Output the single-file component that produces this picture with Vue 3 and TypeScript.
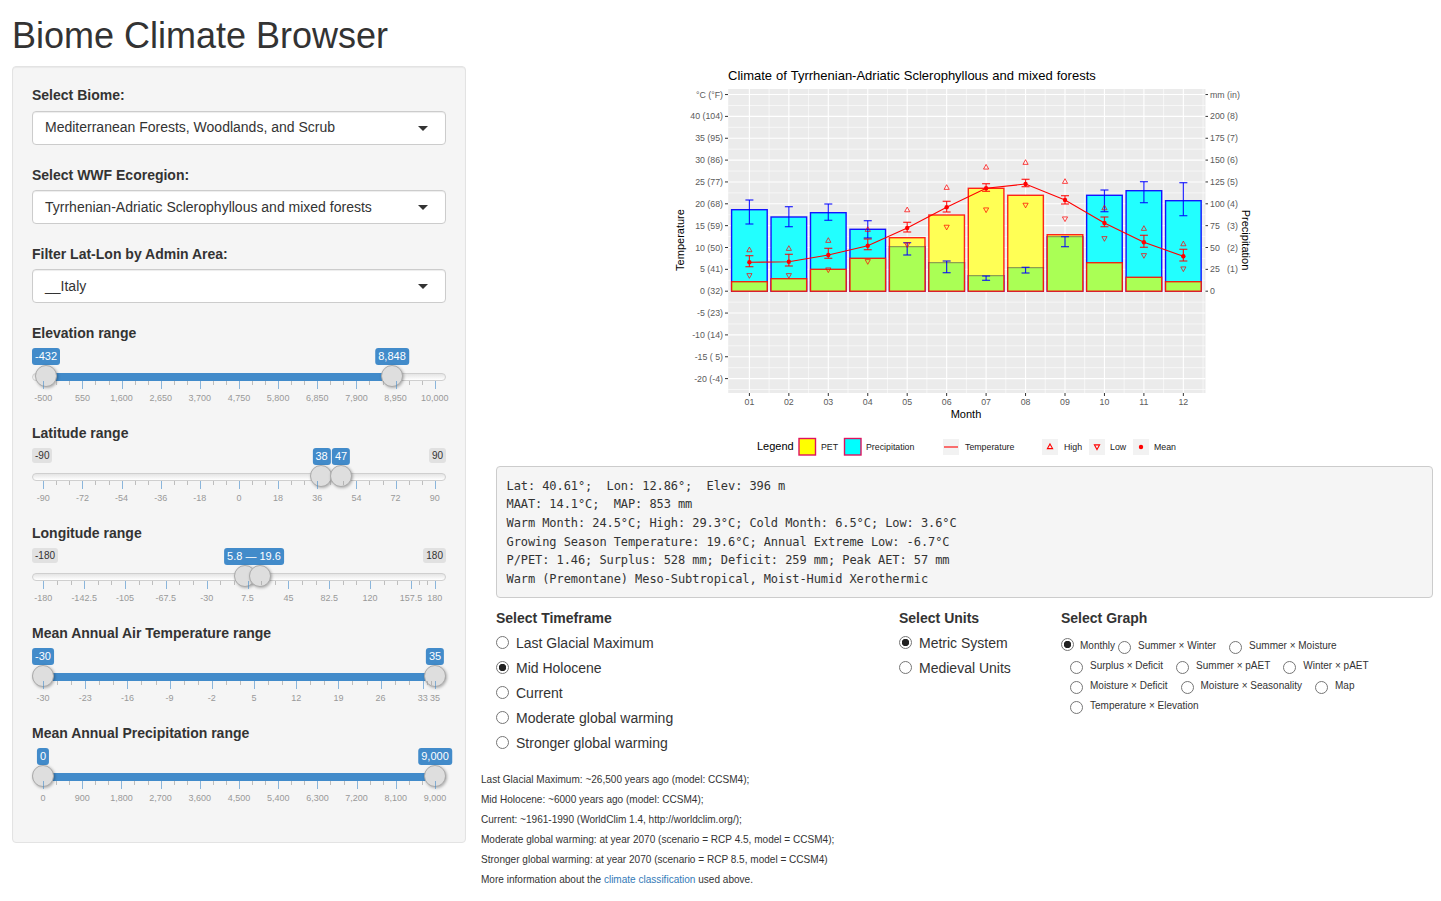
<script setup lang="ts">
interface Tag {
  text: string
  center: number
}

interface SliderDef {
  label: string
  ticks: [number, string][]
  handles: number[]
  tags: Tag[]
  fill: [number, number] | null
  minTag?: string
  maxTag?: string
}

function evenTicks(labels: string[], start: number, step: number): [number, string][] {
  return labels.map((l, i) => [start + i * step, l])
}

const sliders: SliderDef[] = [
  {
    label: 'Elevation range',
    ticks: evenTicks(['-500', '550', '1,600', '2,650', '3,700', '4,750', '5,800', '6,850', '7,900', '8,950', '10,000'], 11.3, 39.14),
    handles: [14, 360],
    tags: [{ text: '-432', center: 14 }, { text: '8,848', center: 360 }],
    fill: [14, 360],
  },
  {
    label: 'Latitude range',
    ticks: evenTicks(['-90', '-72', '-54', '-36', '-18', '0', '18', '36', '54', '72', '90'], 11.3, 39.14),
    handles: [289, 309],
    tags: [{ text: '38', center: 289.5 }, { text: '47', center: 309 }],
    fill: null,
    minTag: '-90',
    maxTag: '90',
  },
  {
    label: 'Longitude range',
    ticks: [
      ...evenTicks(['-180', '-142.5', '-105', '-67.5', '-30', '7.5', '45', '82.5', '120', '157.5'], 11.3, 40.85),
      [402.7, '180'],
    ],
    handles: [213, 228],
    tags: [{ text: '5.8 — 19.6', center: 222 }],
    fill: null,
    minTag: '-180',
    maxTag: '180',
  },
  {
    label: 'Mean Annual Air Temperature range',
    ticks: [
      ...evenTicks(['-30', '-23', '-16', '-9', '-2', '5', '12', '19', '26', '33'], 11, 42.2),
      [403, '35'],
    ],
    handles: [11, 403],
    tags: [{ text: '-30', center: 11 }, { text: '35', center: 403 }],
    fill: [11, 403],
  },
  {
    label: 'Mean Annual Precipitation range',
    ticks: evenTicks(['0', '900', '1,800', '2,700', '3,600', '4,500', '5,400', '6,300', '7,200', '8,100', '9,000'], 11, 39.2),
    handles: [11, 403],
    tags: [{ text: '0', center: 11 }, { text: '9,000', center: 403 }],
    fill: [11, 403],
  },
]

function minorTicks(def: SliderDef) {
  const out: number[] = []
  for (let i = 0; i < def.ticks.length - 1; i++) {
    const a = def.ticks[i][0]
    const b = def.ticks[i + 1][0]
    out.push(a + (b - a) / 3, a + (2 * (b - a)) / 3)
  }
  return out
}

const timeframes = ['Last Glacial Maximum', 'Mid Holocene', 'Current', 'Moderate global warming', 'Stronger global warming']
const units = ['Metric System', 'Medieval Units']
const graphRows = [
  ['Monthly', 'Summer × Winter', 'Summer × Moisture'],
  ['Surplus × Deficit', 'Summer × pAET', 'Winter × pAET'],
  ['Moisture × Deficit', 'Moisture × Seasonality', 'Map'],
  ['Temperature × Elevation'],
]

const statLines = [
  'Lat: 40.61°;  Lon: 12.86°;  Elev: 396 m',
  'MAAT: 14.1°C;  MAP: 853 mm',
  'Warm Month: 24.5°C; High: 29.3°C; Cold Month: 6.5°C; Low: 3.6°C',
  'Growing Season Temperature: 19.6°C; Annual Extreme Low: -6.7°C',
  'P/PET: 1.46; Surplus: 528 mm; Deficit: 259 mm; Peak AET: 57 mm',
  'Warm (Premontane) Meso-Subtropical, Moist-Humid Xerothermic',
]

// chart: the svg viewBox uses the coordinates of the page
const zeroY = 291.2
const perDeg = 4.37
const monthX = (i: number) => 749.4 + i * 39.45
const tempY = (t: number) => zeroY - t * perDeg

const leftLabels: [number, string][] = [
  [45, '°C (°F)'], [40, '40 (104)'], [35, '35 (95)'], [30, '30 (86)'], [25, '25 (77)'], [20, '20 (68)'],
  [15, '15 (59)'], [10, '10 (50)'], [5, '5 (41)'], [0, '0 (32)'], [-5, '-5 (23)'], [-10, '-10 (14)'],
  [-15, '-15 ( 5)'], [-20, '-20 (-4)'],
]
const rightLabels: [number, string][] = [
  [45, 'mm (in)'], [40, '200 (8)'], [35, '175 (7)'], [30, '150 (6)'], [25, '125 (5)'], [20, '100 (4)'],
  [15, '75   (3)'], [10, '50   (2)'], [5, '25   (1)'], [0, '0'],
]
const majorY = leftLabels.map((l) => tempY(l[0]))
const minorY = leftLabels.map((l) => tempY(l[0] - 2.5))
const months = ['01', '02', '03', '04', '05', '06', '07', '08', '09', '10', '11', '12']

const climate = [
  { cyan: 209.7, pet: 281.7, blue: [200, 224], red: [255.7, 266.7], mean: 262.3, high: 249.7, low: 275.7 },
  { cyan: 217, pet: 278.7, blue: [206.7, 226.7], red: [254.3, 266], mean: 261.7, high: 248.3, low: 275.7 },
  { cyan: 212.7, pet: 269.3, blue: [204, 220.3], red: [248.3, 258.3], mean: 255, high: 240.3, low: 270 },
  { cyan: 229.3, pet: 258.3, blue: [220.7, 238], red: [239, 249.7], mean: 245.7, high: 229.3, low: 261.7 },
  { cyan: 246.7, pet: 237.7, blue: [242.7, 255], red: [222.3, 232], mean: 228, high: 209.7, low: 245 },
  { cyan: 262.7, pet: 215, blue: [261, 272.7], red: [201.3, 212], mean: 207.3, high: 187.3, low: 227.3 },
  { cyan: 275.7, pet: 188.3, blue: [276, 280.3], red: [183.7, 191.3], mean: 188.3, high: 167, low: 210 },
  { cyan: 267.7, pet: 195.3, blue: [267.3, 273], red: [179.3, 186.7], mean: 184, high: 162.3, low: 205.3 },
  { cyan: 236.7, pet: 234.7, blue: [236.7, 246.7], red: [195.7, 204], mean: 200, high: 181.3, low: 219 },
  { cyan: 195.3, pet: 262.7, blue: [190, 211.7], red: [217, 226.7], mean: 223, high: 207.7, low: 238.7 },
  { cyan: 190.7, pet: 277.3, blue: [181.7, 202.7], red: [235.3, 247.3], mean: 242.3, high: 228.3, low: 255.7 },
  { cyan: 200.7, pet: 281.7, blue: [182.7, 215.7], red: [249.3, 261], mean: 256.3, high: 243.7, low: 269 },
]
const meanLine = climate.map((c, i) => `${monthX(i)},${c.mean}`).join(' ')

const upTri = (x: number, y: number, s = 2.6) => `${x},${y - s} ${x + s},${y + s * 0.8} ${x - s},${y + s * 0.8}`
const downTri = (x: number, y: number, s = 2.6) => `${x},${y + s} ${x + s},${y - s * 0.8} ${x - s},${y - s * 0.8}`
</script>

<template>
  <div class="page">
    <h1 class="title">Biome Climate Browser</h1>
    <div class="columns">
      <aside class="well">
        <div class="select-group">
          <label class="ctl-label">Select Biome:</label>
          <div class="select">Mediterranean Forests, Woodlands, and Scrub<span class="caret"></span></div>
        </div>
        <div class="select-group">
          <label class="ctl-label">Select WWF Ecoregion:</label>
          <div class="select">Tyrrhenian-Adriatic Sclerophyllous and mixed forests<span class="caret"></span></div>
        </div>
        <div class="select-group">
          <label class="ctl-label">Filter Lat-Lon by Admin Area:</label>
          <div class="select">__Italy<span class="caret"></span></div>
        </div>

        <div v-for="s in sliders" :key="s.label" class="slider-group">
          <label class="ctl-label">{{ s.label }}</label>
          <div class="rs">
            <span v-if="s.minTag" class="rs-side rs-side--min">{{ s.minTag }}</span>
            <span v-if="s.maxTag" class="rs-side rs-side--max">{{ s.maxTag }}</span>
            <span
              v-for="t in s.tags"
              :key="t.text"
              class="rs-tag"
              :style="{ left: t.center + 'px' }"
              :class="{ 'rs-tag--clamp': t.text === '-432' }"
            >{{ t.text }}</span>
            <div class="rs-track"></div>
            <div
              v-if="s.fill"
              class="rs-fill"
              :style="{ left: s.fill[0] + 'px', width: s.fill[1] - s.fill[0] + 'px' }"
            ></div>
            <span
              v-for="h in s.handles"
              :key="h"
              class="rs-handle"
              :style="{ left: h + 'px' }"
            ></span>
            <span
              v-for="m in minorTicks(s)"
              :key="m"
              class="rs-minor"
              :style="{ left: m + 'px' }"
            ></span>
            <template v-for="t in s.ticks" :key="t[1]">
              <span class="rs-major" :style="{ left: t[0] + 'px' }"></span>
              <span class="rs-num" :style="{ left: t[0] + 'px' }">{{ t[1] }}</span>
            </template>
          </div>
        </div>
      </aside>

      <main class="main">
        <div class="inner">
          <svg class="chart" width="937" height="400" viewBox="496 66 937 400">
            <text x="728" y="80" class="c-title">Climate of Tyrrhenian-Adriatic Sclerophyllous and mixed forests</text>
            <rect x="728.2" y="89" width="477.3" height="304" fill="#ebebeb" />
            <line v-for="y in minorY" :key="y" x1="728.2" x2="1205.5" :y1="y" :y2="y" stroke="#fff" stroke-width="0.6" />
            <line v-for="y in majorY" :key="y" x1="728.2" x2="1205.5" :y1="y" :y2="y" stroke="#fff" stroke-width="1.1" />
            <template v-for="(m, i) in months" :key="m">
              <line :x1="monthX(i)" :x2="monthX(i)" y1="89" y2="393" stroke="#fff" stroke-width="1.1" />
              <line :x1="monthX(i) + 19.7" :x2="monthX(i) + 19.7" y1="89" y2="393" stroke="#fff" stroke-width="0.6" />
              <line :x1="monthX(i)" :x2="monthX(i)" y1="393" y2="396" stroke="#333" stroke-width="1" />
              <text :x="monthX(i)" y="405" text-anchor="middle" class="c-tick">{{ m }}</text>
            </template>

            <template v-for="l in leftLabels" :key="l[1]">
              <line x1="725" x2="728" :y1="tempY(l[0])" :y2="tempY(l[0])" stroke="#333" stroke-width="1" />
              <text x="723" :y="tempY(l[0]) + 3" text-anchor="end" class="c-tick">{{ l[1] }}</text>
            </template>
            <template v-for="l in rightLabels" :key="l[1]">
              <line x1="1205.5" x2="1208" :y1="tempY(l[0])" :y2="tempY(l[0])" stroke="#333" stroke-width="1" />
              <text x="1210" :y="tempY(l[0]) + 3" class="c-tick">{{ l[1] }}</text>
            </template>

            <template v-for="(c, i) in climate" :key="i">
              <rect :x="monthX(i) - 17.8" :y="c.cyan" width="35.6" :height="zeroY - c.cyan" fill="#22ffff" stroke="#1414ff" stroke-width="1.4" />
              <rect :x="monthX(i) - 17.8" :y="c.pet" width="35.6" :height="zeroY - c.pet" fill="#ffff55" />
              <rect
                :x="monthX(i) - 17.8"
                :y="Math.max(c.cyan, c.pet)"
                width="35.6"
                :height="zeroY - Math.max(c.cyan, c.pet)"
                fill="#aaff55"
              />
              <line
                v-if="c.pet < c.cyan"
                :x1="monthX(i) - 17.8"
                :x2="monthX(i) + 17.8"
                :y1="c.cyan"
                :y2="c.cyan"
                stroke="#8f9f4f"
                stroke-width="1.2"
              />
              <rect :x="monthX(i) - 17.8" :y="c.pet" width="35.6" :height="zeroY - c.pet" fill="none" stroke="#ff0000" stroke-opacity="0.85" stroke-width="1.4" />
            </template>
            <template v-for="(c, i) in climate" :key="'err' + i">
              <g stroke="#0000ff" stroke-width="1.2" stroke-opacity="0.85">
                <line :x1="monthX(i)" :x2="monthX(i)" :y1="c.blue[0]" :y2="c.blue[1]" />
                <line :x1="monthX(i) - 4" :x2="monthX(i) + 4" :y1="c.blue[0]" :y2="c.blue[0]" />
                <line :x1="monthX(i) - 4" :x2="monthX(i) + 4" :y1="c.blue[1]" :y2="c.blue[1]" />
              </g>
              <g stroke="#ff0000" stroke-width="1.2" stroke-opacity="0.85">
                <line :x1="monthX(i)" :x2="monthX(i)" :y1="c.red[0]" :y2="c.red[1]" />
                <line :x1="monthX(i) - 4" :x2="monthX(i) + 4" :y1="c.red[0]" :y2="c.red[0]" />
                <line :x1="monthX(i) - 4" :x2="monthX(i) + 4" :y1="c.red[1]" :y2="c.red[1]" />
              </g>
              <polygon :points="upTri(monthX(i), c.high)" fill="none" stroke="#ff0000" stroke-opacity="0.8" stroke-width="0.9" />
              <polygon :points="downTri(monthX(i), c.low)" fill="none" stroke="#ff0000" stroke-opacity="0.8" stroke-width="0.9" />
              <circle :cx="monthX(i)" :cy="c.mean" r="2.2" fill="#ff0000" />
            </template>
            <polyline :points="meanLine" fill="none" stroke="#ff0000" stroke-width="1.1" />

            <text x="966" y="418" text-anchor="middle" class="c-axis">Month</text>
            <text transform="translate(684 240) rotate(-90)" text-anchor="middle" class="c-axis">Temperature</text>
            <text transform="translate(1242 240) rotate(90)" text-anchor="middle" class="c-axis">Precipitation</text>

            <text x="757" y="450" class="c-axis">Legend</text>
            <rect x="799" y="438.5" width="16.5" height="16.5" fill="#ffff00" stroke="#e0115f" stroke-width="1.4" />
            <text x="821" y="450" class="c-leg">PET</text>
            <rect x="844.5" y="438.5" width="16.5" height="16.5" fill="#00ffff" stroke="#e0115f" stroke-width="1.4" />
            <text x="866" y="450" class="c-leg">Precipitation</text>
            <rect x="943" y="439" width="16" height="16" fill="#f2f2f2" />
            <line x1="944" x2="958" y1="447" y2="447" stroke="#ff0000" stroke-width="1.1" />
            <text x="965" y="450" class="c-leg">Temperature</text>
            <rect x="1042" y="439" width="16" height="16" fill="#f2f2f2" />
            <polygon :points="upTri(1050, 446.5)" fill="none" stroke="#ff0000" stroke-width="1.1" />
            <text x="1064" y="450" class="c-leg">High</text>
            <rect x="1089" y="439" width="16" height="16" fill="#f2f2f2" />
            <polygon :points="downTri(1097, 447)" fill="none" stroke="#ff0000" stroke-width="1.1" />
            <text x="1110" y="450" class="c-leg">Low</text>
            <rect x="1133" y="439" width="16" height="16" fill="#f2f2f2" />
            <circle cx="1141" cy="447" r="2.2" fill="#ff0000" />
            <text x="1154" y="450" class="c-leg">Mean</text>
          </svg>

          <pre class="stats"><template v-for="l in statLines" :key="l">{{ l }}
</template></pre>

          <div class="choices">
            <div class="choice-col choice-col--time">
              <div class="ctl-label ctl-label--tight">Select Timeframe</div>
              <label v-for="(t, i) in timeframes" :key="t" class="radio-line">
                <input type="radio" name="time" :checked="i === 1" />{{ t }}
              </label>
            </div>
            <div class="choice-col choice-col--units">
              <div class="ctl-label ctl-label--tight">Select Units</div>
              <label v-for="(u, i) in units" :key="u" class="radio-line">
                <input type="radio" name="units" :checked="i === 0" />{{ u }}
              </label>
            </div>
            <div class="choice-col">
              <div class="ctl-label">Select Graph</div>
              <div class="graph-rows">
                <div v-for="(row, r) in graphRows" :key="r" class="graph-row" :class="{ 'graph-row--first': r === 0 }">
                  <label v-for="g in row" :key="g" class="graph-item" :class="{ 'graph-item--on': g === 'Monthly' }">
                    <input type="radio" name="graph" :checked="g === 'Monthly'" />{{ g }}
                  </label>
                </div>
              </div>
            </div>
          </div>
        </div>

        <div class="notes">
          <p>Last Glacial Maximum: ~26,500 years ago (model: CCSM4);</p>
          <p>Mid Holocene: ~6000 years ago (model: CCSM4);</p>
          <p>Current: ~1961-1990 (WorldClim 1.4, http://worldclim.org/);</p>
          <p>Moderate global warming: at year 2070 (scenario = RCP 4.5, model = CCSM4);</p>
          <p>Stronger global warming: at year 2070 (scenario = RCP 8.5, model = CCSM4)</p>
          <p>More information about the <a href="#">climate classification</a> used above.</p>
        </div>
      </main>
    </div>
  </div>
</template>

<style>
body {
  background: #fff;
}
</style>

<style scoped>
.page {
  font-family: "Liberation Sans", Arial, sans-serif;
  color: #333;
  font-size: 14px;
  line-height: 20px;
  padding: 0 8px 0 12px;
  box-sizing: border-box;
  width: 1441px;
}

.title {
  font-size: 36px;
  font-weight: 400;
  line-height: 40px;
  margin: 16px 0 10px;
}

.columns {
  display: flex;
  align-items: flex-start;
}

.well {
  width: 454px;
  height: 777px;
  box-sizing: border-box;
  flex: none;
  background: #f5f5f5;
  border: 1px solid #e3e3e3;
  border-radius: 4px;
  padding: 19px;
  box-shadow: inset 0 1px 1px rgba(0, 0, 0, 0.05);
}

.ctl-label {
  display: block;
  font-weight: 700;
  margin-bottom: 5px;
}

.ctl-label--tight {
  margin-bottom: 2px;
}

.select-group {
  margin-bottom: 20px;
}

.select-group:first-child .ctl-label {
  margin-top: -1px;
  margin-bottom: 6px;
}

.select-group:first-child .select {
  padding-top: 5px;
}

.select {
  position: relative;
  height: 34px;
  box-sizing: border-box;
  border: 1px solid #ccc;
  border-radius: 4px;
  background: #fff;
  padding: 6px 12px;
  box-shadow: inset 0 1px 1px rgba(0, 0, 0, 0.075);
}

.caret {
  position: absolute;
  right: 17px;
  top: 14px;
  border-style: solid;
  border-width: 5px 5px 0;
  border-color: #333 transparent transparent;
}

.slider-group {
  height: 100px;
}

.rs {
  position: relative;
  height: 75px;
  font-size: 11px;
  line-height: 15px;
}

.rs-side {
  position: absolute;
  top: 0;
  height: 15px;
  padding: 0 3px;
  font-size: 10px;
  background: #e1e1e1;
  border-radius: 3px;
  color: #333;
}

.rs-side--min {
  left: 0;
}

.rs-side--max {
  right: 0;
}

.rs-tag {
  position: absolute;
  top: 0;
  height: 17px;
  line-height: 17px;
  padding: 0 3px;
  background: #428bca;
  color: #fff;
  border-radius: 3px;
  transform: translateX(-50%);
  white-space: nowrap;
}

.rs-tag--clamp {
  transform: translateX(-14px);
}

.rs-track {
  position: absolute;
  top: 25px;
  left: 0;
  right: 0;
  height: 8px;
  box-sizing: border-box;
  border: 1px solid #cfcfcf;
  border-radius: 4px;
  background: linear-gradient(#e4e4e4, #fff);
}

.rs-fill {
  position: absolute;
  top: 25px;
  height: 8px;
  background: #428bca;
}

.rs-handle {
  position: absolute;
  top: 17px;
  width: 22px;
  height: 22px;
  box-sizing: border-box;
  margin-left: -11px;
  border-radius: 50%;
  background: #dedede;
  border: 1px solid #ababab;
  box-shadow: 1px 1px 3px rgba(0, 0, 0, 0.3);
}

.rs-major,
.rs-minor {
  position: absolute;
  top: 33px;
  width: 1px;
  background: #428bca;
  opacity: 0.6;
}

.rs-major {
  height: 8px;
}

.rs-minor {
  height: 4px;
  background: #999;
}

.rs-num {
  position: absolute;
  top: 44px;
  font-size: 9px;
  line-height: 12px;
  color: #999;
  transform: translateX(-50%);
  white-space: nowrap;
}

.main {
  flex: 1;
  margin-left: 15px;
  min-width: 0;
}

.inner {
  padding-left: 15px;
}

.chart {
  display: block;
}

.chart text {
  font-family: "Liberation Sans", Arial, sans-serif;
  white-space: pre;
}

.c-title {
  font-size: 13px;
  word-spacing: 0.4px;
  fill: #000;
}

.c-tick {
  font-size: 8.8px;
  fill: #5a5a5a;
}

.c-axis {
  font-size: 11px;
  fill: #000;
}

.c-leg {
  font-size: 8.8px;
  fill: #222;
}

.stats {
  margin: 0;
  box-sizing: border-box;
  height: 132px;
  padding: 9.5px;
  background: #f5f5f5;
  border: 1px solid #ccc;
  border-radius: 4px;
  font-family: "DejaVu Sans Mono", "Liberation Mono", monospace;
  font-size: 12px;
  letter-spacing: -0.08px;
  line-height: 18.7px;
  color: #333;
}

.choices {
  display: flex;
  padding-top: 10px;
}

.choice-col--time {
  width: 403px;
}

.choice-col--units {
  width: 162px;
}

.radio-line {
  display: flex;
  align-items: center;
  height: 25px;
  gap: 7px;
}

input[type='radio'] {
  appearance: none;
  flex: none;
  width: 13px;
  height: 13px;
  margin: 0;
  border: 1px solid #767676;
  border-radius: 50%;
  background: #fff;
  box-sizing: border-box;
}

input[type='radio']:checked {
  background: radial-gradient(circle, #222 0, #222 3.4px, #fff 4px);
}

.graph-rows {
  font-size: 10px;
  line-height: 20px;
  padding-top: 2px;
}

.graph-row {
  display: flex;
  gap: 13px;
  height: 20px;
  padding-left: 9px;
}

.graph-row--first {
  padding-left: 0;
  height: 21px;
}

.graph-item {
  display: flex;
  align-items: center;
  gap: 7px;
  white-space: nowrap;
}

.graph-item input {
  transform: translateY(1px);
}

.graph-row--first .graph-item input {
  transform: translateY(2px);
}

.graph-item--on {
  margin-right: -10px;
  gap: 6px;
}

.graph-row--first .graph-item--on input {
  transform: translateY(-1px);
}

.notes {
  margin-top: 15px;
  font-size: 10.05px;
  line-height: 20px;
}

.notes p {
  margin: 0;
}

.notes a {
  color: #337ab7;
  text-decoration: none;
}
</style>
